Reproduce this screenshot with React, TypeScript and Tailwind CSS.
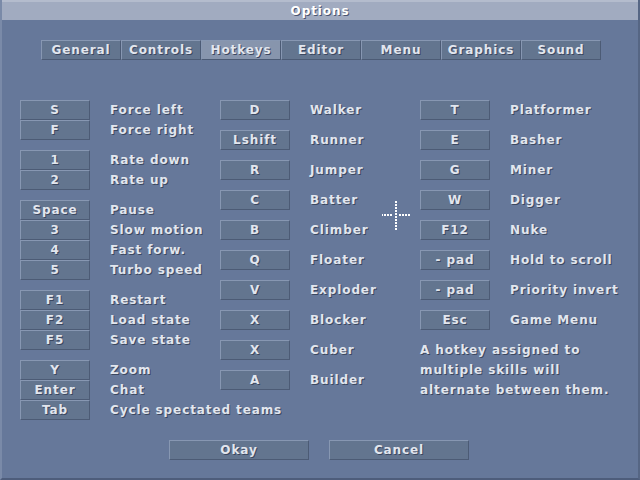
import React from 'react';

const txt = "text-[#e2e6ee] [text-shadow:1px_1px_0_#3b4760]";

function Key({ label, w = 'w-[70px]', selected = false }: { label: string; w?: string; selected?: boolean }) {
  return (
    <div
      className={`${w} shrink-0 h-[20px] flex items-center justify-center border border-t-[#8797b2] border-l-[#8797b2] border-b-[#4c5b75] border-r-[#4c5b75] ${selected ? 'bg-[#8795ad]' : 'bg-[#63758f]'} ${txt}`}
    >
      {label}
    </div>
  );
}

function Row({ k, label }: { k: string; label: string }) {
  return (
    <div className="flex items-center h-[20px]">
      <Key label={k} />
      <span className={`ml-[20px] whitespace-nowrap ${txt}`}>{label}</span>
    </div>
  );
}

const col1: [string, string][][] = [
  [['S', 'Force left'], ['F', 'Force right']],
  [['1', 'Rate down'], ['2', 'Rate up']],
  [['Space', 'Pause'], ['3', 'Slow motion'], ['4', 'Fast forw.'], ['5', 'Turbo speed']],
  [['F1', 'Restart'], ['F2', 'Load state'], ['F5', 'Save state']],
  [['Y', 'Zoom'], ['Enter', 'Chat'], ['Tab', 'Cycle spectated teams']],
];

const col2: [string, string][] = [
  ['D', 'Walker'], ['Lshift', 'Runner'], ['R', 'Jumper'], ['C', 'Batter'], ['B', 'Climber'],
  ['Q', 'Floater'], ['V', 'Exploder'], ['X', 'Blocker'], ['X', 'Cuber'], ['A', 'Builder'],
];

const col3: [string, string][] = [
  ['T', 'Platformer'], ['E', 'Basher'], ['G', 'Miner'], ['W', 'Digger'], ['F12', 'Nuke'],
  ['- pad', 'Hold to scroll'], ['- pad', 'Priority invert'], ['Esc', 'Game Menu'],
];

const tabs = ['General', 'Controls', 'Hotkeys', 'Editor', 'Menu', 'Graphics', 'Sound'];

// dotted cross cursor over the dialog
function Crosshair() {
  const dots: React.ReactNode[] = [];
  for (let i = 0; i < 10; i++) {
    dots.push(<rect key={'v' + i} x={13} y={i * 3} width={2} height={2} fill="#fff" />);
    if (i !== 4 && i !== 5) {
      dots.push(<rect key={'h' + i} x={i * 3 - 1} y={13} width={2} height={2} fill="#fff" />);
    }
  }
  return (
    <svg width="30" height="30" viewBox="0 0 30 30" className="absolute left-[380px] top-[201px]">
      {dots}
    </svg>
  );
}

export default function App() {
  return (
    <div
      className="relative w-[640px] h-[480px] bg-[#66789a] flex flex-col text-[12px] font-bold tracking-[0.9px] border-l-2 border-l-[#7a8aa8] border-r-2 border-r-[#566684] border-b-2 border-b-[#4e5d7b]"
      style={{ fontFamily: '"DejaVu Sans", "Liberation Sans", sans-serif' }}
    >
      {/* Title bar */}
      <div className="h-[20px] bg-[#a1abc0] border-t-2 border-t-[#b4bccd] flex items-center justify-center text-white [text-shadow:1px_1px_0_#4a5570]">
        Options
      </div>

      {/* Tabs */}
      <div className="flex mt-[20px] ml-[39px]">
        {tabs.map(t => (
          <Key key={t} label={t} w="w-[80px]" selected={t === 'Hotkeys'} />
        ))}
      </div>

      {/* Hotkey columns */}
      <div className="flex mt-[40px] ml-[18px]">
        <div className="w-[200px] flex flex-col gap-[10px]">
          {col1.map((g, i) => (
            <div key={i} className="flex flex-col">
              {g.map(([k, l], j) => <Row key={j} k={k} label={l} />)}
            </div>
          ))}
        </div>
        <div className="w-[200px] flex flex-col gap-[10px]">
          {col2.map(([k, l], i) => <Row key={i} k={k} label={l} />)}
        </div>
        <div className="w-[200px] flex flex-col gap-[10px]">
          {col3.map(([k, l], i) => <Row key={i} k={k} label={l} />)}
          <p className={`leading-[20px] ${txt}`}>
            A hotkey assigned to<br />multiple skills will<br />alternate between them.
          </p>
        </div>
      </div>

      {/* Bottom buttons */}
      <div className="mt-auto mb-[18px] flex justify-center gap-[20px] pr-[2px]">
        <Key label="Okay" w="w-[140px]" />
        <Key label="Cancel" w="w-[140px]" />
      </div>

      <Crosshair />
    </div>
  );
}
